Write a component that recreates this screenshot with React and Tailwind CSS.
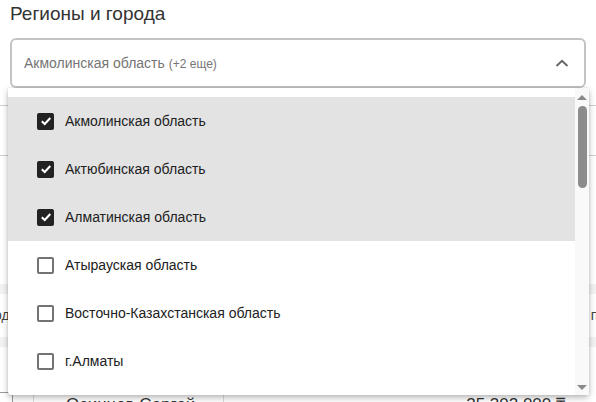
import React from "react";

const items = [
  { label: "Акмолинская область", checked: true },
  { label: "Актюбинская область", checked: true },
  { label: "Алматинская область", checked: true },
  { label: "Атырауская область", checked: false },
  { label: "Восточно-Казахстанская область", checked: false },
  { label: "г.Алматы", checked: false },
];

function Box({ checked }) {
  if (checked) {
    return (
      <span className="flex h-[17px] w-[17px] items-center justify-center rounded-[2px] bg-[#222]">
        <svg width="12" height="12" viewBox="0 0 12 12">
          <path d="M1.8 6.2 L4.7 9 L10.3 3" fill="none" stroke="#fff" strokeWidth="2" />
        </svg>
      </span>
    );
  }
  return <span className="block h-[17px] w-[17px] rounded-[2px] border-2 border-[#737373] bg-white" />;
}

export default function App() {
  return (
    <div
      className="relative h-[402px] w-[596px] overflow-hidden bg-white"
      style={{ fontFamily: '"Liberation Sans", Arial, sans-serif' }}
    >
      {/* background page */}
      <div className="pl-[10px] pt-[2px] text-[19px] leading-[23px] text-[#333]">Регионы и города</div>
      <div className="mx-[10px] mt-[13px] flex h-[50px] items-center justify-between rounded-[6px] border-2 border-[#c4c4c4] pl-[12px] pr-[15px]">
        <span className="text-[14px] text-[#757575]">
          Акмолинская область <span className="text-[12px]">(+2 еще)</span>
        </span>
        <svg width="14" height="8" viewBox="0 0 14 8">
          <path d="M1.5 7 L7 1.8 L12.5 7" fill="none" stroke="#666" strokeWidth="2" />
        </svg>
      </div>

      {/* content behind the dropdown */}
      <div className="mt-[17px] h-[51px] border-y border-[#cfcfcf]" />
      <div className="mt-[128px] h-[10px] bg-[#f2f2f2]" />
      <div className="flex h-[43px] items-center justify-between text-[14px] text-[#444]">
        <span className="-ml-[6px]">од</span>
        <span className="-mr-[10px]">пп</span>
      </div>
      <div className="h-[10px] bg-[#f2f2f2]" />
      <div className="mt-[41px] flex h-[40px] items-start text-[17px] text-[#333]">
        <span className="-ml-[6px] mt-[4px] block h-[20px] w-[19px] rounded-[4px] border border-[#999]" />
        <span className="ml-[20px] mt-[4px] h-[40px] border-l border-[#ddd]" />
        <span className="ml-[32px] mt-[7px] leading-[20px]">Осинцев Сергей</span>
        <span className="ml-[28px] mt-[4px] h-[40px] border-l border-[#ddd]" />
        <span className="ml-auto mr-[31px] mt-[7px] leading-[20px]">25 302 000 ₸</span>
      </div>

      {/* dropdown overlay */}
      <div className="absolute left-[8px] top-[88px] flex h-[307px] w-[581px] rounded-b-[4px] bg-white shadow-[0_3px_6px_rgba(0,0,0,0.25),0_0_3px_rgba(0,0,0,0.12)]">
        <div className="flex-1 pt-[9px]">
          {items.map((it) => (
            <div
              key={it.label}
              className={`flex h-[48px] items-center gap-[11px] pl-[29px] text-[14px] text-[#212121] ${it.checked ? "bg-[#e3e3e3]" : ""}`}
            >
              <Box checked={it.checked} />
              <span>{it.label}</span>
            </div>
          ))}
        </div>
        <div className="flex w-[14px] flex-col items-center bg-[#f9f9f9] pt-[7px]">
          <svg width="10" height="5" viewBox="0 0 10 5">
            <path d="M0 5 L5 0 L10 5 Z" fill="#8a8a8a" />
          </svg>
          <div className="mt-[6px] h-[82px] w-[9px] rounded-full bg-[#8c8c8c]" />
          <div className="flex-1" />
          <svg className="mb-[5px]" width="10" height="5" viewBox="0 0 10 5">
            <path d="M0 0 L10 0 L5 5 Z" fill="#8a8a8a" />
          </svg>
        </div>
      </div>
    </div>
  );
}
